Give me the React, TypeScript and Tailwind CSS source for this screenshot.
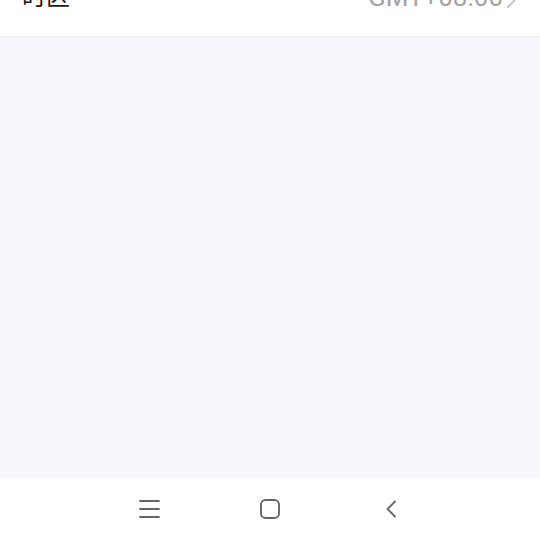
export default function App() {
  return (
    <div
      className="flex h-[540px] w-[540px] flex-col overflow-hidden bg-[#f5f7fc]"
      style={{ fontFamily: 'Roboto, "Noto Sans CJK SC", sans-serif' }}
    >
      {/* timezone row, scrolled mostly out of view */}
      <div className="flex h-[37px] shrink-0 flex-col border-b border-[#eef0f6] bg-white">
        <div className="-mt-[34px] flex h-[62px] shrink-0 items-center justify-between pl-[22px] pr-[20px]">
          <span className="text-[24px] text-[#1a1a1a]">时区</span>
          <div className="flex items-center gap-[3px]">
            <span className="text-[26px] text-[#a3a3a3]">GMT+08:00</span>
            <svg width="14" height="24" viewBox="0 0 14 24" fill="none">
              <path d="M2 2l10 10-10 10" stroke="#c6c6c6" strokeWidth="2" strokeLinecap="round" strokeLinejoin="round" />
            </svg>
          </div>
        </div>
      </div>

      <div className="flex-1" />

      {/* system navigation bar */}
      <div className="flex h-[62px] shrink-0 items-center justify-center gap-[97px] bg-white pb-[1px]">
        <div className="flex w-[24px] justify-center">
          <svg width="21" height="18" viewBox="0 0 21 18" fill="none">
            <path d="M1 1h19M1 9h19M1 17h19" stroke="#666" strokeWidth="1.8" strokeLinecap="round" />
          </svg>
        </div>
        <div className="flex w-[24px] justify-center">
          <svg width="20" height="20" viewBox="0 0 20 20" fill="none">
            <rect x="1" y="1" width="18" height="18" rx="4.5" stroke="#666" strokeWidth="1.9" />
          </svg>
        </div>
        <div className="flex w-[24px] justify-center">
          <svg width="12" height="18" viewBox="0 0 12 18" fill="none">
            <path d="M10 1.5L2.5 9l7.5 7.5" stroke="#666" strokeWidth="1.8" strokeLinecap="round" strokeLinejoin="round" />
          </svg>
        </div>
      </div>
    </div>
  );
}
